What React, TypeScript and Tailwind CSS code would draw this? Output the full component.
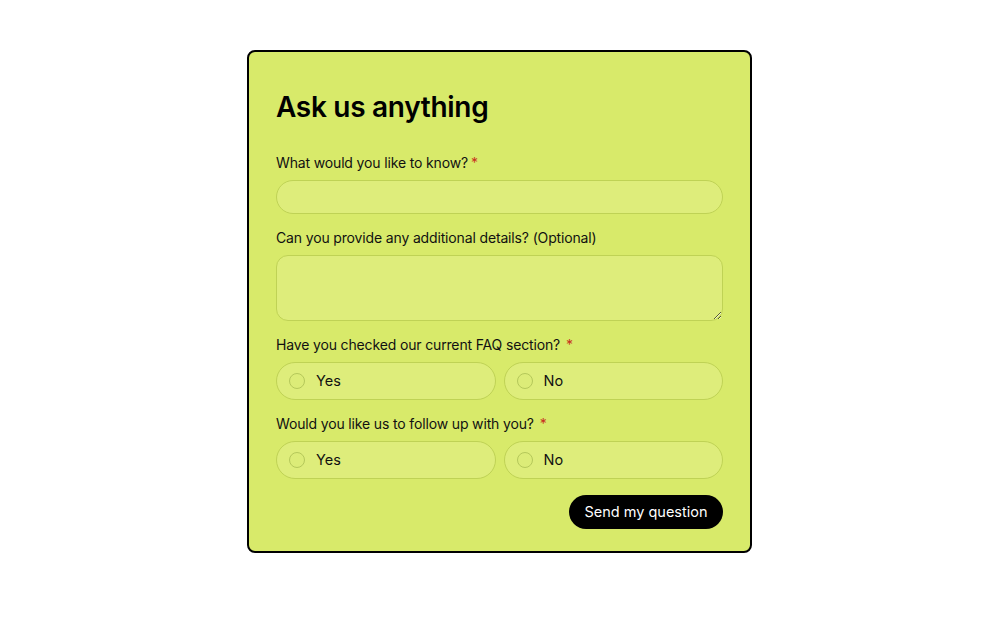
import React from "react";

function Radio({ label, name }: { label: string; name: string }) {
  return (
    <label className="flex-1 flex items-center h-[38px] rounded-full border border-[#bfd255] bg-[#deed7b] pl-[12px] cursor-pointer">
      <span className="w-4 h-4 rounded-full border border-[#b5c85a] bg-[#dcec78]" />
      <span className="ml-[11px] text-[14.5px] text-[#111]">{label}</span>
      <input type="radio" name={name} className="hidden" />
    </label>
  );
}

function Label({ children, star, spaced }: { children: React.ReactNode; star?: boolean; spaced?: boolean }) {
  return (
    <div className="text-[14px] leading-5 text-[#111] tracking-[-0.15px]">
      {children}
      {star && <span className={`text-[#c8321e] ${spaced ? "ml-[6px]" : "ml-[3px]"}`}>*</span>}
    </div>
  );
}

export default function App() {
  return (
    <div className="min-h-screen bg-white flex justify-center pt-[50px]" style={{ fontFamily: "Inter, 'Noto Sans', sans-serif" }}>
      <div className="w-[505px] h-[503px] border-2 border-black rounded-[8px] bg-[#d8ea6a] pt-[37px] px-[27px] pb-[22px] flex flex-col">
        <h1 className="text-[28px] leading-9 font-semibold text-black tracking-[-0.3px]">Ask us anything</h1>
        <div className="mt-[28px]">
          <Label star>What would you like to know?</Label>
          <input className="mt-[7px] w-full h-[34px] rounded-full border border-[#bfd255] bg-[#deed7b] outline-none px-4" />
        </div>
        <div className="mt-[14px]">
          <Label>Can you provide any additional details? (Optional)</Label>
          <textarea className="mt-[7px] block w-full h-[66px] rounded-[12px] border border-[#bfd255] bg-[#deed7b] outline-none px-3 py-2" />
        </div>
        <div className="mt-[14px]">
          <Label star spaced>Have you checked our current FAQ section?</Label>
          <div className="mt-[7px] flex gap-2">
            <Radio label="Yes" name="faq" />
            <Radio label="No" name="faq" />
          </div>
        </div>
        <div className="mt-[14px]">
          <Label star spaced>Would you like us to follow up with you?</Label>
          <div className="mt-[7px] flex gap-2">
            <Radio label="Yes" name="follow" />
            <Radio label="No" name="follow" />
          </div>
        </div>
        <div className="mt-4 flex justify-end">
          <button className="h-[34px] w-[154px] rounded-full bg-black text-white text-[14.5px]">Send my question</button>
        </div>
      </div>
    </div>
  );
}
